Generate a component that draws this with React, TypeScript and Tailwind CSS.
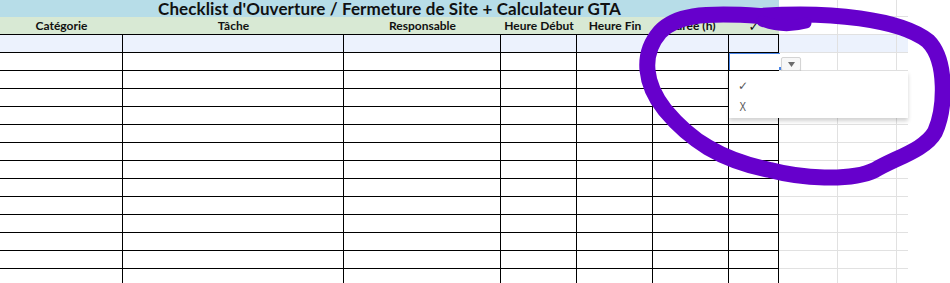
import React from 'react';

const cols = [
  { label: 'Catégorie', w: 'w-[123px]' },
  { label: 'Tâche', w: 'w-[221px]' },
  { label: 'Responsable', w: 'w-[157px]' },
  { label: 'Heure Début', w: 'w-[76px]' },
  { label: 'Heure Fin', w: 'w-[76px]' },
  { label: 'Durée (h)', w: 'w-[76px]' },
  { label: '✓', w: 'w-[50px]' },
];

const Extras = ({ tint = '' }: { tint?: string }) => (
  <div className="flex">
    <div className={`w-[59px] h-full border-r border-b border-[#e1e1e1] ${tint}`} />
    <div className={`w-[59px] h-full border-r border-b border-[#e1e1e1] ${tint}`} />
    <div className={`w-[11px] h-full border-b border-[#e1e1e1] ${tint}`} />
  </div>
);

const BodyRow = ({ tint = false }: { tint?: boolean }) => (
  <div className="flex h-[18px] shrink-0">
    <div className="flex w-[779px]">
      {cols.map((c) => (
        <div
          key={c.label}
          className={`${c.w} h-full border-r border-b border-black ${tint ? 'bg-[#ecf2fd]' : 'bg-white'}`}
        />
      ))}
    </div>
    <Extras tint={tint ? 'bg-[#ecf2fd]' : ''} />
  </div>
);

export default function App() {
  return (
    <div className="relative w-[950px] h-[283px] overflow-hidden bg-white text-[#111] font-['Lato','Liberation_Sans','DejaVu_Sans',sans-serif]">
      <div className="flex flex-col">
        {/* title */}
        <div className="flex h-[17px] shrink-0">
          <div className="w-[779px] h-full bg-[#b7dde8] flex items-center justify-center overflow-hidden">
            <span className="text-[17px] font-bold leading-none tracking-[0.1px]">
              Checklist d'Ouverture / Fermeture de Site + Calculateur GTA
            </span>
          </div>
          <Extras />
        </div>

        {/* column headers */}
        <div className="flex h-[18px] shrink-0">
          <div className="flex w-[779px] h-full bg-[#d8e9d4] border-b border-black">
            {cols.map((c) => (
              <div
                key={c.label}
                className={`${c.w} flex items-center justify-center pt-[1px] text-[12px] font-bold leading-none ${
                  c.label === '✓' ? "font-['DejaVu_Sans',sans-serif] text-[13px]" : ''
                }`}
              >
                {c.label}
              </div>
            ))}
          </div>
          <Extras />
        </div>

        <BodyRow tint />
        {Array.from({ length: 13 }).map((_, i) => (
          <BodyRow key={i} />
        ))}
      </div>

      {/* active cell */}
      <div className="absolute left-[729px] top-[53px] w-[51px] h-[17px] bg-white border-l border-t border-[#4a86e8]" />
      <div className="absolute left-[779px] top-[67px] w-[3px] h-[3px] bg-[#4a86e8]" />

      {/* dropdown chip */}
      <div className="absolute left-[781px] top-[57px] w-[20px] h-[14px] rounded-[2px] border border-[#d4d4d4] bg-[#f7f7f7] shadow-[0_1px_1px_rgba(0,0,0,0.15)] flex items-center justify-center">
        <svg width="7" height="5" viewBox="0 0 7 5">
          <path d="M0 0 H7 L3.5 5 Z" fill="#6b6b6b" />
        </svg>
      </div>

      {/* dropdown menu */}
      <div className="absolute left-[729px] top-[71px] w-[179px] h-[47px] bg-white shadow-[0_3px_4px_rgba(0,0,0,0.18)] flex flex-col pl-[9px] pt-[7px] gap-[5px] text-[#555] font-['Liberation_Sans','DejaVu_Sans',sans-serif]">
        <span className="text-[12px] leading-[16px] font-['DejaVu_Sans',sans-serif]">✓</span>
        <span className="text-[13px] leading-[16px] pl-[2px] scale-x-[0.75] origin-left">X</span>
      </div>

      {/* hand-drawn circle */}
      <svg className="absolute inset-0 pointer-events-none" width="950" height="283" viewBox="0 0 950 283">
        <path
          d="M760 16 C830 11 900 19 928 41 C948 61 945 110 935 132 C925 150 895 158 875 170 C850 182 800 178 770 170 C720 160 690 140 665 110 C645 85 640 55 660 32 C675 16 700 12 760 16"
          fill="none"
          stroke="#6600cc"
          strokeWidth="16"
          strokeLinecap="round"
          strokeLinejoin="round"
        />
        <path d="M762 21 C780 28 795 26 806 23" fill="none" stroke="#6600cc" strokeWidth="11" strokeLinecap="round" />
      </svg>
    </div>
  );
}
